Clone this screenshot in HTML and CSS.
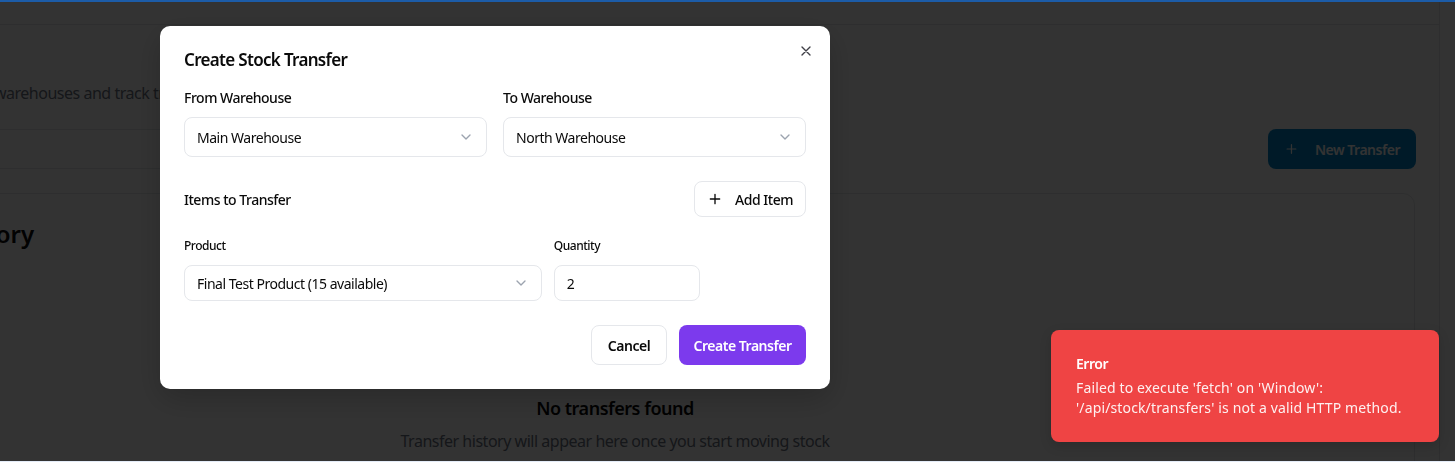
FILE: index.html
```html
<!DOCTYPE html>
<html lang="en">
<head>
<meta charset="utf-8">
<title>Stock Transfers</title>
<link rel="stylesheet" href="styles.css">
</head>
<body>
<div class="topline"></div>
<div class="app">
  <main class="main">
    <header class="header"></header>
    <section class="content">
      <h1 class="page-title">Stock Transfers</h1>
      <p class="page-sub">Move inventory between warehouses and track transfers</p>
      <div class="toolbar">
        <div class="search">Search transfers...</div>
        <button class="btn-primary">
          <svg viewBox="0 0 24 24" width="16" height="16" fill="none" stroke="currentColor" stroke-width="2" stroke-linecap="round"><path d="M12 5v14M5 12h14"/></svg>
          <span>New Transfer</span>
        </button>
      </div>
      <div class="card">
        <h2 class="card-title">Transfer History</h2>
        <div class="empty">
          <h3 class="empty-title">No transfers found</h3>
          <p class="empty-sub">Transfer history will appear here once you start moving stock</p>
        </div>
      </div>
    </section>
  </main>
</div>

<div class="overlay"></div>
<div class="bottomline"></div>

<div class="modal">
  <button class="close" aria-label="Close">
    <svg viewBox="0 0 24 24" width="16" height="16" fill="none" stroke="currentColor" stroke-width="2" stroke-linecap="round"><path d="M18 6 6 18M6 6l12 12"/></svg>
  </button>
  <h2 class="modal-title">Create Stock Transfer</h2>
  <div class="two-col">
    <div class="field">
      <label class="label">From Warehouse</label>
      <div class="select tall"><span>Main Warehouse</span>
        <svg class="chev" viewBox="0 0 24 24" width="16" height="16" fill="none" stroke="currentColor" stroke-width="2" stroke-linecap="round" stroke-linejoin="round"><path d="m6 9 6 6 6-6"/></svg>
      </div>
    </div>
    <div class="field">
      <label class="label">To Warehouse</label>
      <div class="select tall"><span>North Warehouse</span>
        <svg class="chev" viewBox="0 0 24 24" width="16" height="16" fill="none" stroke="currentColor" stroke-width="2" stroke-linecap="round" stroke-linejoin="round"><path d="m6 9 6 6 6-6"/></svg>
      </div>
    </div>
  </div>
  <div class="items-head">
    <span class="items-title">Items to Transfer</span>
    <button class="btn-outline">
      <svg viewBox="0 0 24 24" width="16" height="16" fill="none" stroke="currentColor" stroke-width="2" stroke-linecap="round"><path d="M12 5v14M5 12h14"/></svg>
      <span>Add Item</span>
    </button>
  </div>
  <div class="item-row">
    <div class="field span7">
      <label class="label small">Product</label>
      <div class="select"><span>Final Test Product (15 available)</span>
        <svg class="chev" viewBox="0 0 24 24" width="16" height="16" fill="none" stroke="currentColor" stroke-width="2" stroke-linecap="round" stroke-linejoin="round"><path d="m6 9 6 6 6-6"/></svg>
      </div>
    </div>
    <div class="field span3">
      <label class="label small">Quantity</label>
      <div class="input">2</div>
    </div>
  </div>
  <div class="footer">
    <button class="btn-cancel">Cancel</button>
    <button class="btn-create">Create Transfer</button>
  </div>
</div>

<div class="toast">
  <div class="toast-title">Error</div>
  <div class="toast-desc">Failed to execute 'fetch' on 'Window': '/api/stock/transfers' is not a valid HTTP method.</div>
</div>
</body>
</html>
```
FILE: styles.css
```css
* { box-sizing: border-box; }
html, body { margin: 0; padding: 0; }
body {
  width: 1455px;
  height: 462px;
  overflow: hidden;
  background: #ffffff;
  font-family: "Noto Sans", "Open Sans", sans-serif;
  letter-spacing: -0.03em;
  color: #0a0a0a;
}
button { font-family: inherit; letter-spacing: inherit; cursor: pointer; }
h1, h2, h3, p { margin: 0; }

.topline {
  position: fixed;
  top: 0; left: 0; right: 0;
  height: 2px;
  background: #1c5ca8;
  z-index: 60;
}
.bottomline {
  position: fixed;
  bottom: 0; left: 0; right: 0;
  height: 1px;
  background: #e4ecf8;
  z-index: 60;
}

.app { display: flex; height: 462px; overflow: hidden; }
.main {
  margin-left: -209px;
  width: 1649px;
  flex: none;
  height: 462px;
  overflow: hidden;
  border-right: 1px solid #e5e7eb;
}
.header { height: 25px; border-bottom: 1px solid #e5e7eb; }
.content { padding: 24px; }
.page-title { font-size: 24px; line-height: 32px; font-weight: 700; }
.page-sub { font-size: 16px; line-height: 24px; color: #6b7280; }

.toolbar {
  margin-top: 24px;
  display: flex;
  justify-content: space-between;
  align-items: center;
  height: 40px;
}
.search {
  width: 520px;
  height: 40px;
  border: 1px solid #e5e7eb;
  border-radius: 8px;
  padding: 0 12px 0 40px;
  display: flex; align-items: center;
  color: #9ca3af; font-size: 14px;
}
.btn-primary {
  height: 40px;
  width: 148px;
  border: none;
  border-radius: 8px;
  background: #0284c7;
  color: #fff;
  font-size: 14px;
  font-weight: 600;
  white-space: nowrap;
  display: flex; align-items: center; justify-content: flex-end; gap: 16px;
  padding: 0 16px;
  margin-right: -1px;
}

.card {
  margin-top: 24px;
  border: 1px solid #e5e7eb;
  border-radius: 12px;
  padding: 24px;
  height: 300px;
}
.card-title { font-size: 24px; line-height: 32px; font-weight: 600; letter-spacing: 0; padding-left: 6px; }
.empty { text-align: center; padding-top: 144px; }
.empty-title { font-size: 18px; line-height: 28px; font-weight: 600; }
.empty-sub { margin-top: 7px; font-size: 16px; line-height: 24px; color: #6b7280; }

.overlay {
  position: fixed; inset: 0;
  background: rgba(0,0,0,0.8);
  z-index: 40;
}

.modal {
  position: fixed;
  left: 160px; top: 26px;
  width: 670px;
  background: #fff;
  border-radius: 10px;
  padding: 24px;
  z-index: 50;
  box-shadow: 0 10px 30px rgba(0,0,0,0.2);
}
.close {
  position: absolute;
  top: 17px; right: 16px;
  width: 16px; height: 16px;
  padding: 0; border: none; background: none;
  color: #3f3f46;
  display: flex;
}
.close svg { width: 16px; height: 16px; }
.modal-title {
  font-size: 17px; line-height: 20px; font-weight: 600;
  letter-spacing: -0.04em;
  margin-bottom: 18px;
}
.two-col { display: grid; grid-template-columns: 1fr 1fr; gap: 16px; }
.field { display: flex; flex-direction: column; }
.label { font-size: 14px; line-height: 20px; font-weight: 500; margin-bottom: 9px; color: #0a0a0a; }
.label.small { font-size: 12px; }
.select, .input {
  height: 36px;
  border: 1px solid #e5e7eb;
  border-radius: 8px;
  padding: 0 12px;
  display: flex; align-items: center; justify-content: space-between;
  font-size: 14px;
  color: #0a0a0a;
}
.select.tall { height: 40px; }
.chev { color: #9ca3af; width: 16px; height: 16px; }

.items-head {
  margin-top: 24px;
  display: flex; justify-content: space-between; align-items: center;
  height: 36px;
}
.items-title { font-size: 14px; font-weight: 500; }
.btn-outline {
  height: 36px;
  border: 1px solid #e5e7eb;
  border-radius: 8px;
  background: #fff;
  padding: 0 12px;
  display: flex; align-items: center; gap: 12px;
  font-size: 14px; font-weight: 500; color: #0a0a0a;
}

.item-row {
  margin-top: 19px;
  display: grid;
  grid-template-columns: repeat(12, 1fr);
  gap: 12px;
}
.span7 { grid-column: span 7; }
.span3 { grid-column: span 3; }

.footer {
  margin-top: 24px;
  display: flex; justify-content: flex-end; gap: 12px;
}
.btn-cancel, .btn-create {
  height: 40px;
  border-radius: 8px;
  font-size: 14px; font-weight: 600;
  padding: 0;
}
.btn-cancel { background: #fff; border: 1px solid #e5e7eb; color: #0a0a0a; width: 76px; }
.btn-create { background: #7c3aed; border: none; color: #fff; width: 127px; }

.toast {
  position: fixed;
  right: 16px; bottom: 20px;
  width: 388px;
  height: 112px;
  background: #ef4444;
  border-radius: 8px;
  padding: 24px 24px 24px 25px;
  color: #fff;
  z-index: 70;
  box-shadow: 0 4px 12px rgba(0,0,0,0.15);
}
.toast-title { font-size: 14px; line-height: 20px; font-weight: 600; }
.toast-desc { font-size: 14px; line-height: 20px; margin-top: 4px; opacity: 0.92; letter-spacing: 0.01em; }
```
